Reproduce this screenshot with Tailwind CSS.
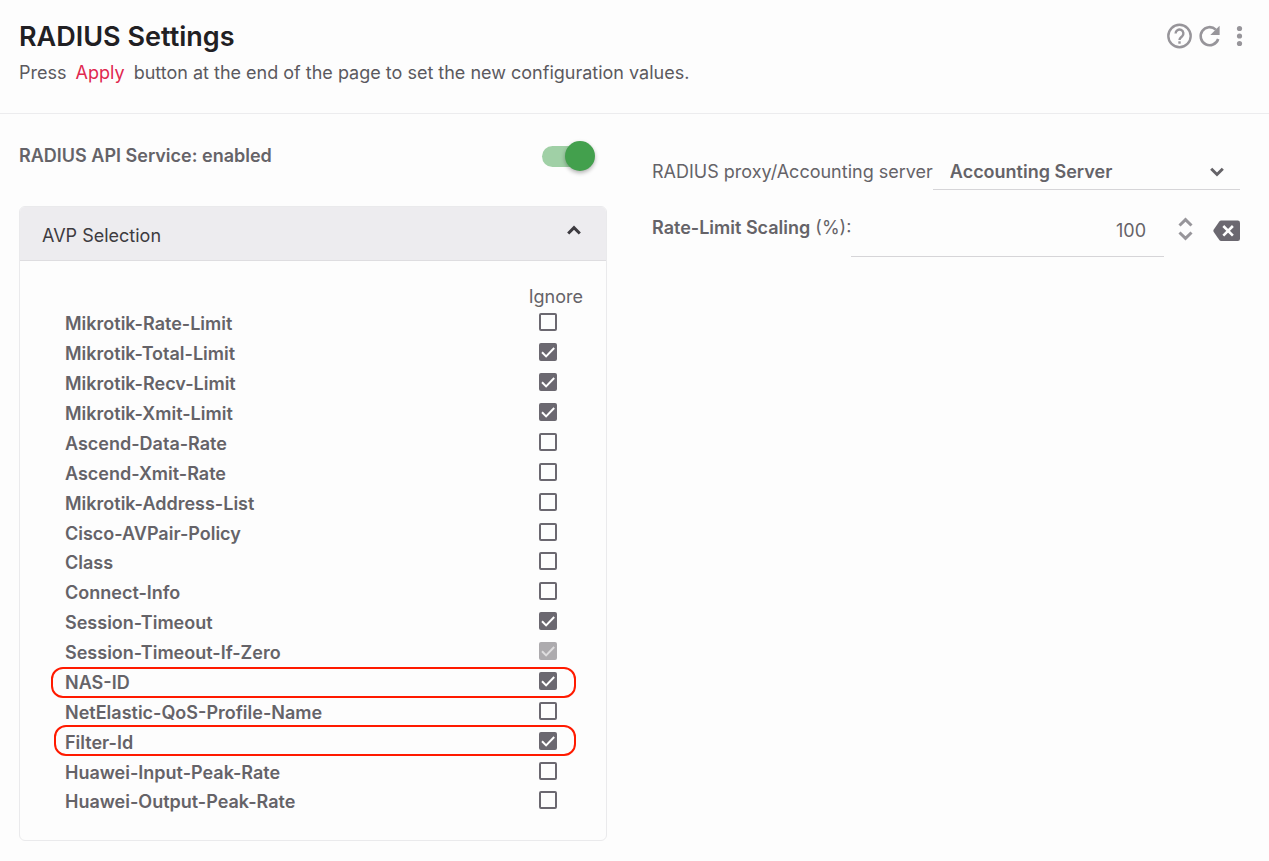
<!DOCTYPE html>
<html lang="en">
<head>
<meta charset="utf-8">
<meta name="viewport" content="width=device-width, initial-scale=1">
<title>RADIUS Settings</title>
<script src="https://cdn.jsdelivr.net/npm/@tailwindcss/browser@4"></script>
</head>
<body class="min-h-screen bg-[#fdfdfd] font-['Inter','Liberation_Sans',sans-serif] text-lg/6 text-[#656368]">

<header class="flex items-start justify-between border-b border-[#ececee] pt-[21px] pr-[22px] pb-7 pl-[19px]">
  <div>
    <h1 class="text-[27px]/8 font-semibold text-[#212023]">RADIUS Settings</h1>
    <p class="mt-2 text-[#5b595e]">Press <span class="mx-1 text-[#e0284f]">Apply</span> button at the end of the page to set the new configuration values.</p>
  </div>
  <div class="flex items-center gap-1 pt-[2px] text-[#97959a]">
    <button type="button" aria-label="Help" class="size-[26px]">
      <svg viewBox="0 0 26 26" fill="none" stroke="currentColor" stroke-width="2.4"><circle cx="12.500" cy="13" r="11.200"/><path d="M8.600 10.500a3.900 3.900 0 1 1 6.500 2.900c-1.500 1.300-2.600 1.800-2.600 3.700"/><path d="M12.500 18.300v2.400"/></svg>
    </button>
    <button type="button" aria-label="Refresh" class="size-[26px]">
      <svg viewBox="0 0 26 26" fill="none" stroke="currentColor" stroke-width="2.6"><path d="M21.200 16A9 9 0 1 1 18.800 6.600"/><path d="M22.600 2.700V12H13.300z" fill="currentColor" stroke="none"/></svg>
    </button>
    <button type="button" aria-label="More options" class="ml-1 h-[26px] w-4">
      <svg viewBox="0 0 16 26" fill="currentColor"><circle cx="8.500" cy="5.500" r="2.600"/><circle cx="8.500" cy="13" r="2.600"/><circle cx="8.500" cy="20.500" r="2.600"/></svg>
    </button>
  </div>
</header>

<svg class="hidden"><symbol id="tick" viewBox="0 0 18 18"><path d="M3 9.300l4.100 4.100L15.200 5" fill="none" stroke="#fff" stroke-width="2"/></symbol></svg>

<main class="grid grid-cols-2 gap-[45px] pr-[29px] pb-5 pl-[19px]">
  <section>
    <div class="mt-[27px] flex h-[30px] items-center justify-between pr-3">
      <label for="api" class="font-semibold">RADIUS API Service: enabled</label>
      <input id="api" type="checkbox" role="switch" checked class="relative h-[21px] w-[53px] appearance-none rounded-full before:absolute before:inset-y-0 before:left-0 before:w-[43px] before:rounded-full before:bg-[#a0d0a6] after:absolute after:-top-[5px] after:left-0 after:size-[30px] after:rounded-full after:bg-[#43a04d] after:shadow-[0_2px_4px_rgba(0,0,0,0.3)] checked:after:left-[23px]">
    </div>

    <div class="mt-[35px] overflow-hidden rounded-md border border-[#eaeaec]">
      <button type="button" aria-expanded="true" class="flex h-[54px] w-full items-center justify-between border-b border-[#dedde0] bg-[#edecef] pt-1 pr-[25px] pl-[22px] text-[#3d3b40]">
        <span>AVP Selection</span>
        <svg class="mb-3 h-[10px] w-[14px]" viewBox="0 0 14 10" fill="none" stroke="currentColor" stroke-width="3"><path d="M1.200 8.500L7 2.700l5.800 5.800"/></svg>
      </button>
      <div class="pt-6 pr-[23px] pb-[23px] pl-[31px]">
        <table class="w-full border-collapse [&_input]:col-start-1 [&_input]:row-start-1 [&_input]:size-[18px] [&_input]:appearance-none [&_input]:rounded-[2px] [&_input]:border-2 [&_input]:border-[#6b6870] [&_input:checked]:bg-[#6b6870] [&_input:disabled]:border-[#adabae] [&_input:disabled]:bg-[#adabae] [&_svg]:pointer-events-none [&_svg]:col-start-1 [&_svg]:row-start-1 [&_svg]:hidden [&_svg]:size-[18px] [&_input:checked+svg]:block [&_input:disabled+svg]:opacity-60 [&_tbody_tr]:relative [&_tbody_tr]:h-[30px] [&_tbody_tr:nth-child(8n)]:h-[29px] [&_tbody_th]:p-0 [&_tbody_th]:pl-[14px] [&_tbody_th]:text-left [&_tbody_th]:font-semibold [&_td]:p-0 [&_td>div]:mb-1 [&_td>div]:ml-[10px] [&_td>div]:grid [&_td>div]:w-[18px]">
          <thead>
            <tr class="h-6"><td></td><th scope="col" class="w-[53px] p-0 text-left leading-6 font-normal">Ignore</th></tr>
          </thead>
          <tbody>
            <tr><th scope="row"><label for="a1">Mikrotik-Rate-Limit</label></th><td><div><input id="a1" type="checkbox"><svg><use href="#tick"/></svg></div></td></tr>
            <tr><th scope="row"><label for="a2">Mikrotik-Total-Limit</label></th><td><div><input id="a2" type="checkbox" checked><svg><use href="#tick"/></svg></div></td></tr>
            <tr><th scope="row"><label for="a3">Mikrotik-Recv-Limit</label></th><td><div><input id="a3" type="checkbox" checked><svg><use href="#tick"/></svg></div></td></tr>
            <tr><th scope="row"><label for="a4">Mikrotik-Xmit-Limit</label></th><td><div><input id="a4" type="checkbox" checked><svg><use href="#tick"/></svg></div></td></tr>
            <tr><th scope="row"><label for="a5">Ascend-Data-Rate</label></th><td><div><input id="a5" type="checkbox"><svg><use href="#tick"/></svg></div></td></tr>
            <tr><th scope="row"><label for="a6">Ascend-Xmit-Rate</label></th><td><div><input id="a6" type="checkbox"><svg><use href="#tick"/></svg></div></td></tr>
            <tr><th scope="row"><label for="a7">Mikrotik-Address-List</label></th><td><div><input id="a7" type="checkbox"><svg><use href="#tick"/></svg></div></td></tr>
            <tr><th scope="row"><label for="a8">Cisco-AVPair-Policy</label></th><td><div><input id="a8" type="checkbox"><svg><use href="#tick"/></svg></div></td></tr>
            <tr><th scope="row"><label for="a9">Class</label></th><td><div><input id="a9" type="checkbox"><svg><use href="#tick"/></svg></div></td></tr>
            <tr><th scope="row"><label for="a10">Connect-Info</label></th><td><div><input id="a10" type="checkbox"><svg><use href="#tick"/></svg></div></td></tr>
            <tr><th scope="row"><label for="a11">Session-Timeout</label></th><td><div><input id="a11" type="checkbox" checked><svg><use href="#tick"/></svg></div></td></tr>
            <tr><th scope="row"><label for="a12">Session-Timeout-If-Zero</label></th><td><div><input id="a12" type="checkbox" checked disabled><svg><use href="#tick"/></svg></div></td></tr>
            <tr><th scope="row"><label for="a13">NAS-ID</label><span class="pointer-events-none absolute -top-px right-[7px] bottom-0 left-0 rounded-xl border-2 border-[#ff1a00]"></span></th><td><div><input id="a13" type="checkbox" checked><svg><use href="#tick"/></svg></div></td></tr>
            <tr><th scope="row"><label for="a14">NetElastic-QoS-Profile-Name</label></th><td><div><input id="a14" type="checkbox"><svg><use href="#tick"/></svg></div></td></tr>
            <tr><th scope="row"><label for="a15">Filter-Id</label><span class="pointer-events-none absolute -top-[3px] right-[7px] bottom-[2px] left-[3px] rounded-xl border-2 border-[#ff1a00]"></span></th><td><div><input id="a15" type="checkbox" checked><svg><use href="#tick"/></svg></div></td></tr>
            <tr><th scope="row"><label for="a16">Huawei-Input-Peak-Rate</label></th><td><div><input id="a16" type="checkbox"><svg><use href="#tick"/></svg></div></td></tr>
            <tr><th scope="row"><label for="a17">Huawei-Output-Peak-Rate</label></th><td><div><input id="a17" type="checkbox"><svg><use href="#tick"/></svg></div></td></tr>
          </tbody>
        </table>
      </div>
    </div>
  </section>

  <section class="pt-10">
    <div class="flex h-9 items-center">
      <label for="server" class="shrink-0 whitespace-nowrap">RADIUS proxy/Accounting server</label>
      <div class="grid h-full min-w-0 flex-1 items-center border-b border-[#d6d5d8]">
        <select id="server" class="col-start-1 row-start-1 h-full w-full appearance-none bg-transparent pl-[17px] font-semibold">
          <option>Accounting Server</option>
          <option>RADIUS proxy</option>
        </select>
        <svg class="pointer-events-none col-start-1 row-start-1 mr-4 h-[10px] w-[14px] justify-self-end" viewBox="0 0 14 10" fill="none" stroke="currentColor" stroke-width="3"><path d="M1.200 1.800L7 7.500l5.800-5.700"/></svg>
      </div>
    </div>
    <div class="mt-[15px] flex h-[52px]">
      <label for="rate" class="shrink-0 pt-[11px] whitespace-nowrap"><span class="font-semibold">Rate-Limit Scaling</span> (%):</label>
      <input id="rate" type="text" inputmode="numeric" value="100" class="min-w-0 flex-1 border-b border-[#d6d5d8] bg-transparent pr-[18px] text-right">
      <div class="ml-[14px] flex flex-col justify-center gap-1 pb-1 text-[#97959a]">
        <button type="button" aria-label="Increase"><svg class="h-[10px] w-[15px]" viewBox="0 0 15 10" fill="none" stroke="currentColor" stroke-width="3"><path d="M1.500 8.500l6-5.800 6 5.800"/></svg></button>
        <button type="button" aria-label="Decrease"><svg class="h-[10px] w-[15px]" viewBox="0 0 15 10" fill="none" stroke="currentColor" stroke-width="3"><path d="M1.500 1.500l6 5.800 6-5.800"/></svg></button>
      </div>
      <button type="button" aria-label="Clear" class="ml-5 text-[#6b6870]">
        <svg class="h-[22px] w-[27px]" viewBox="0 0 27 22"><path d="M8.200.5H24.800Q27 .5 27 2.700V18.800Q27 21 24.800 21H8.200Q7 21 6.300 20L.6 11.800Q0 10.800.6 9.700L6.300 1.500Q7 .5 8.200.5z" fill="currentColor"/><path d="M10.300 6l9.600 9.600m0-9.600l-9.600 9.600" stroke="#fff" stroke-width="2.600"/></svg>
      </button>
    </div>
  </section>
</main>
</body>
</html>
